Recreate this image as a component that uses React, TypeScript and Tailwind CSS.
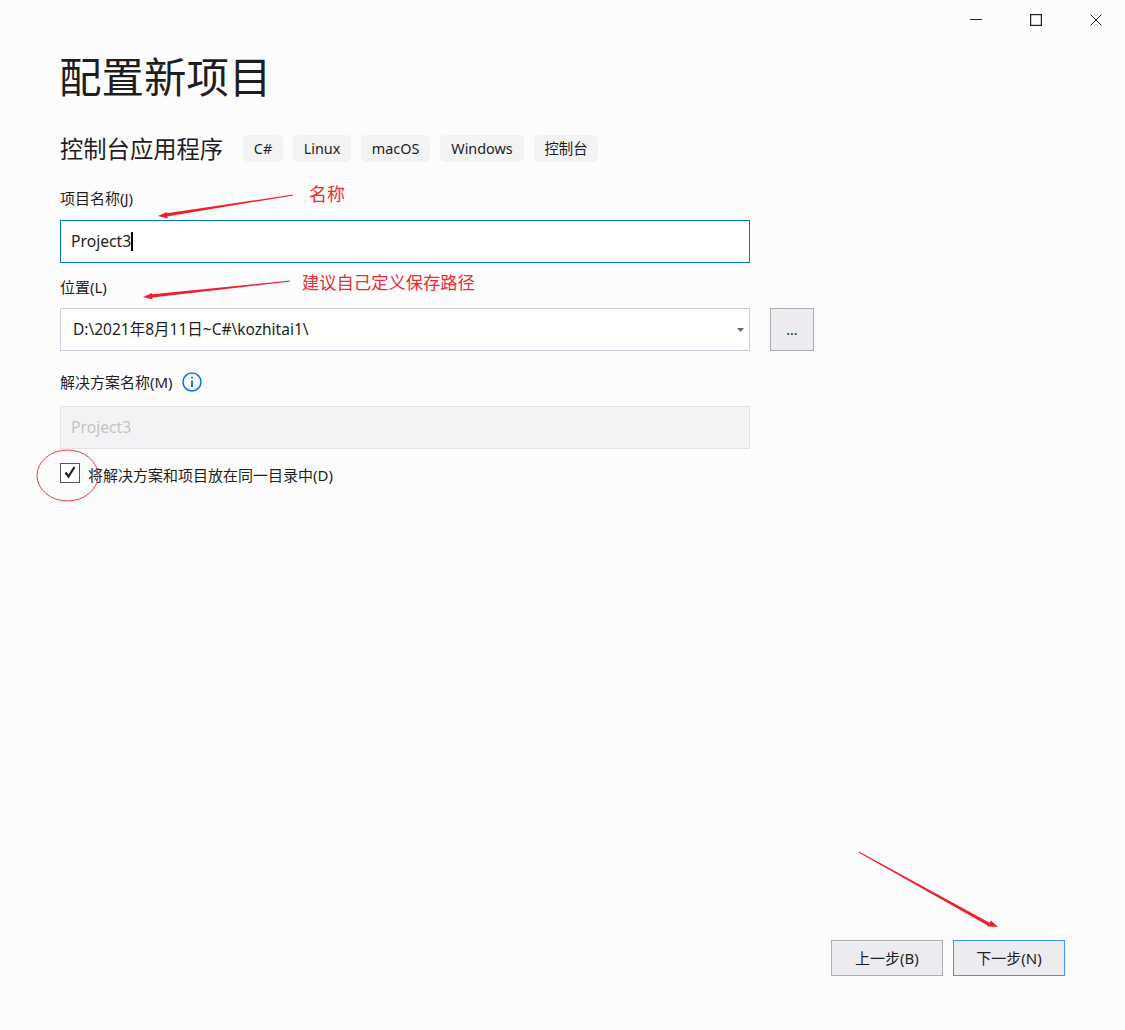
const tags = [
  { label: "C#", width: "w-[40px]" },
  { label: "Linux", width: "w-[58px]" },
  { label: "macOS", width: "w-[69px]" },
  { label: "Windows", width: "w-[84px]" },
  { label: "控制台", width: "w-[64px]" },
];

const font = "font-['Noto_Sans','Noto_Sans_CJK_SC',sans-serif]";

// red marks someone drew over the screenshot
const Annotations = () => (
  <>
    <svg className="absolute left-0 top-0" width="1125" height="1030" fill="none">
      <path d="M293 194.6 L165 213.6 L165.5 216.8 L293 195.4 Z" fill="#ee2030" />
      <path d="M158 216 L167 212 L167.5 218.5 Z" fill="#ee2030" />
      <path d="M290 280.6 L150 294.6 L150.5 297.8 L290 281.4 Z" fill="#ee2030" />
      <path d="M143 297 L152 293 L152.5 299.5 Z" fill="#ee2030" />
      <ellipse cx="67.5" cy="475.5" rx="30.5" ry="25.5" stroke="#ee3a45" strokeWidth="1" />
      <path d="M859 851.6 L990 923 L988.6 926 L858.6 852.4 Z" fill="#ee2030" />
      <path d="M998 927 L987 926.5 L991 920.5 Z" fill="#ee2030" />
    </svg>
    <span className="absolute left-[309px] top-[181px] text-[18px] leading-[26px] text-[#ee2a35]">名称</span>
    <span className="absolute left-[302px] top-[270px] text-[17.3px] leading-[26px] text-[#ee2a35] whitespace-nowrap">
      建议自己定义保存路径
    </span>
  </>
);

const WindowButtons = () => (
  <div className="flex justify-end h-[40px] pr-[23px] pt-[14px] gap-[48px]">
    <svg width="12" height="12" fill="none" stroke="#222" strokeWidth="1">
      <path d="M0 5.5 H12" />
    </svg>
    <svg width="12" height="12" fill="none" stroke="#222" strokeWidth="1.2">
      <rect x="0.6" y="0.6" width="10.8" height="10.8" />
    </svg>
    <svg width="12" height="12" fill="none" stroke="#222" strokeWidth="1">
      <path d="M0.5 0.5 L11.5 11.5 M11.5 0.5 L0.5 11.5" />
    </svg>
  </div>
);

export default function App() {
  return (
    <div className={`relative w-[1125px] h-[1030px] bg-[#fcfcfd] text-[#1e1e1e] overflow-hidden ${font}`}>
      <WindowButtons />

      <div className="pl-[60px]">
        <h1 className="text-[42.5px] leading-[50px] mt-[12px] font-normal -ml-[1px]">配置新项目</h1>

        <div className="flex items-center mt-[33px] h-[27px]">
          <span className="text-[23.3px] w-[183px] whitespace-nowrap pt-[1px]">控制台应用程序</span>
          <div className="flex gap-[10px]">
            {tags.map((t) => (
              <span
                key={t.label}
                className={`h-[27px] pt-[1px] flex items-center justify-center rounded-[5px] bg-[#f3f3f4] text-[14.4px] ${t.width}`}
              >
                {t.label}
              </span>
            ))}
          </div>
        </div>

        <label className="block text-[15px] leading-[20px] mt-[26px]">项目名称(J)</label>
        <div className="w-[690px] h-[43px] mt-[12px] border border-[#0078d4] bg-white flex items-center pl-[10px] text-[15.7px]">
          Project3
          <span className="w-[2px] h-[19px] bg-black" />
        </div>

        <label className="block text-[15px] leading-[20px] mt-[14px]">位置(L)</label>
        <div className="flex mt-[11px] gap-[20px]">
          <div className="w-[690px] h-[43px] border border-[#cdcddc] bg-white flex items-center justify-between pl-[12px] pr-[5px] text-[15.5px]">
            <span>D:\2021年8月11日~C#\kozhitai1\</span>
            <svg width="7" height="4" fill="#666">
              <path d="M0 0 H7 L3.5 4 Z" />
            </svg>
          </div>
          <button className="w-[44px] h-[43px] border border-[#acacac] bg-[#ecebf0] text-[14px]">...</button>
        </div>

        <div className="flex items-center gap-[9px] mt-[21px] h-[20px] text-[15px]">
          解决方案名称(M)
          <svg width="20" height="20" viewBox="0 0 20 20" fill="none" stroke="#0a78d4" strokeWidth="1.5">
            <circle cx="10" cy="10" r="9" />
            <path d="M10 8.5 V15" strokeWidth="2" />
            <path d="M10 4.8 V6.6" strokeWidth="2" />
          </svg>
        </div>
        <div className="w-[690px] h-[43px] mt-[14px] border border-[#e3e3e9] bg-[#f3f3f5] flex items-center pl-[10px] text-[15.7px] text-[#c4c4c4]">
          Project3
        </div>

        <div className="flex items-center gap-[8px] mt-[14px] h-[20px] text-[15px]">
          <span className="w-[20px] h-[20px] border border-[#555] bg-white">
            <svg width="18" height="18" fill="none" stroke="#222" strokeWidth="2.2">
              <path d="M4.5 8.5 L7.5 12.5 L13.5 3" />
            </svg>
          </span>
          <span className="mt-[5px]">将解决方案和项目放在同一目录中(D)</span>
        </div>

        <div className="flex justify-end gap-[10px] w-[1005px] mt-[457px]">
          <button className="w-[112px] h-[36px] border border-[#acacac] bg-[#ecebf0] text-[15px]">上一步(B)</button>
          <button className="w-[112px] h-[36px] border border-[#3399ff] bg-[#ecebf0] text-[15px]">下一步(N)</button>
        </div>
      </div>

      <Annotations />
    </div>
  );
}
